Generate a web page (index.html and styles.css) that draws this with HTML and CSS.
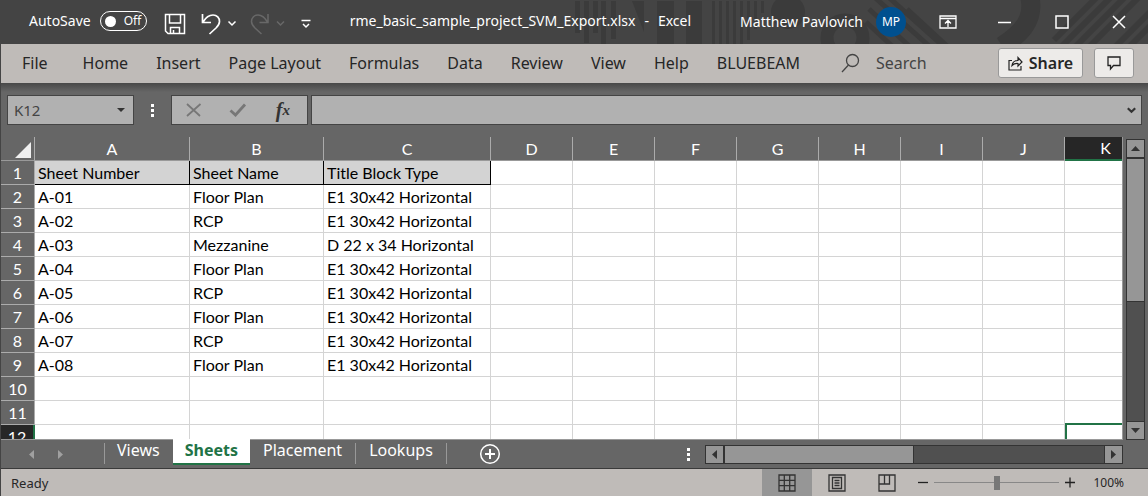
FILE: index.html
```html
<!DOCTYPE html>
<html lang="en">
<head>
<meta charset="utf-8">
<title>rme_basic_sample_project_SVM_Export.xlsx - Excel</title>
<link rel="stylesheet" href="styles.css">
</head>
<body>
<div class="app">
  <header class="titlebar">
    <svg class="titlebar-art" width="588" height="44" viewBox="0 0 588 44" aria-hidden="true">
      <g fill="#3b3b3b">
        <path d="M15 1h5v32h-5zM24 1h5v42h-5zM33 1h5v32h-5zM41 1h5v43h-5zM51 1h5v38h-5z"/>
        <path d="M72 1h12v31zM97 1h17v43H97zM126 1h16v43h-16z"/>
        <path d="M152 1h3v43h-3zM159 1h3v43h-3zM166 1h3v43h-3zM173 1h3v43h-3zM180 1h3v43h-3zM187 1h3v39h-3zM194 1h3v28h-3zM201 1h3v12h-3z"/>
        <circle cx="228" cy="12" r="17"/>
      </g>
      <g fill="none" stroke="#3b3b3b">
        <circle cx="285" cy="38" r="18" stroke-width="13"/>
        <path stroke-width="5" d="M325-6l58 52M311-6l58 52M347 9l40 37M309 9l40 37M306 22l26 24"/>
        <path stroke-width="19" d="M470-2c4 20-6 34-28 48"/>
        <path stroke-width="6" d="M494 40l44-44M502 46l50-50M516 46l50-50M530 46l50-50M556 46l34-34M570 46l20-20"/>
      </g>
    </svg>
    <label class="autosave">AutoSave
      <input type="checkbox" role="switch" class="autosave-input">
      <span class="switch"><span class="switch-knob"></span>Off</span>
    </label>
    <div class="quick">
      <button class="icon-btn save" aria-label="Save"><svg width="22" height="22" viewBox="0 0 22 22"><g fill="none" stroke="#fff" stroke-width="1.500"><path d="M1.500 1.500h19v19H4l-2.500-2.500zM5.500 1.500v8.500h11V1.500M6.500 20.500v-6h9v6M9.500 20v-3"/></g></svg></button>
      <button class="icon-btn undo" aria-label="Undo"><svg width="34" height="22" viewBox="0 0 34 22"><g fill="none" stroke="#fff"><path stroke-width="1.700" d="M1.500 1v8.500H10M2 9C5 4 8 2 12 2c4 0 6.500 3 6.500 6.500 0 2.500-1.500 4.500-3.500 6.500L8.500 21"/><path stroke-width="1.500" d="M27.500 8.500l3.500 3.500 3.500-3.500"/></g></svg></button>
      <button class="icon-btn redo" aria-label="Redo" disabled><svg width="34" height="22" viewBox="0 0 34 22"><g fill="none" stroke="#686868"><path stroke-width="1.500" d="M18 1v8.500H9.500M17.500 9C14.500 4 11.500 2 8 2 4 2 1.500 5 1.500 8.500c0 2.500 1.500 4.500 3.500 6.500l6.500 6"/><path stroke-width="1.500" d="M27 8.500l3.500 3.500L34 8.500"/></g></svg></button>
      <button class="icon-btn more" aria-label="Customize Quick Access Toolbar"><svg width="10" height="10" viewBox="0 0 10 10"><path fill="none" stroke="#fff" stroke-width="1.500" d="M.5 1.500h9M2 5l3 3 3-3"/></svg></button>
    </div>
    <h1 class="doc-title"><span>rme_basic_sample_project_SVM_Export.xlsx</span><span>-</span><span>Excel</span></h1>
    <div class="account"><span>Matthew Pavlovich</span><span class="avatar">MP</span></div>
    <div class="window-controls">
      <button class="icon-btn" aria-label="Ribbon Display Options"><svg width="18" height="14" viewBox="0 0 18 14"><path fill="none" stroke="#fff" stroke-width="1.300" d="M1 1h16v12H1zM1 3.500h16M9 12V6M6 8.500L9 5.500l3 3"/></svg></button>
      <button class="icon-btn" aria-label="Minimize"><svg width="14" height="14" viewBox="0 0 14 14"><path stroke="#fff" stroke-width="1.500" d="M0 7.500h13"/></svg></button>
      <button class="icon-btn" aria-label="Maximize"><svg width="14" height="14" viewBox="0 0 14 14"><path fill="none" stroke="#fff" stroke-width="1.500" d="M1 1h12v12H1z"/></svg></button>
      <button class="icon-btn" aria-label="Close"><svg width="14" height="14" viewBox="0 0 14 14"><path stroke="#fff" stroke-width="1.500" d="M1 1l12 12M13 1L1 13"/></svg></button>
    </div>
  </header>

  <nav class="ribbon">
    <div class="tabs">
      <button class="tab file">File</button>
      <button class="tab">Home</button>
      <button class="tab">Insert</button>
      <button class="tab">Page Layout</button>
      <button class="tab">Formulas</button>
      <button class="tab">Data</button>
      <button class="tab">Review</button>
      <button class="tab">View</button>
      <button class="tab">Help</button>
      <button class="tab">BLUEBEAM</button>
    </div>
    <button class="search"><svg width="20" height="20" viewBox="0 0 20 20"><g fill="none" stroke="#444" stroke-width="1.300"><circle cx="11.500" cy="7.500" r="6"/><path d="M7.500 12L1 19"/></g></svg>Search</button>
    <div class="ribbon-actions">
      <button class="pill share"><svg width="15" height="15" viewBox="0 0 15 15"><path fill="none" stroke="#222" stroke-width="1.200" d="M4 4.500H1v9.500h12v-4M4 9.500C4.500 6 7 4.500 10 4.500V1.500L14 6l-4 4V7.500C7.500 7.300 5.500 8 4 9.500z"/></svg>Share</button>
      <button class="pill comment" aria-label="Comments"><svg width="14" height="14" viewBox="0 0 14 14"><path fill="none" stroke="#222" stroke-width="1.300" d="M1 1h12v8.500H6.500L3.500 13V9.500H1z"/></svg></button>
    </div>
  </nav>

  <div class="formula-bar">
    <button class="name-box"><span>K12</span><svg width="8" height="4" viewBox="0 0 8 4"><path fill="#333" d="M0 0h8L4 4z"/></svg></button>
    <span class="dots"><i></i><i></i><i></i></span>
    <div class="fx-group">
      <button class="icon-btn" aria-label="Cancel"><svg width="16" height="14" viewBox="0 0 16 14"><path fill="none" stroke="#777" stroke-width="1.800" d="M1 1l13 12M14.500 1L1 13"/></svg></button>
      <button class="icon-btn" aria-label="Enter"><svg width="18" height="14" viewBox="0 0 18 14"><path fill="none" stroke="#777" stroke-width="2.800" d="M1.500 7.500l5 4.500L16 1.500"/></svg></button>
      <button class="icon-btn fx" aria-label="Insert Function">f<sub>x</sub></button>
    </div>
    <div class="formula-field">
      <input class="formula-input" type="text" aria-label="Formula">
      <svg width="9" height="7" viewBox="0 0 9 7"><path fill="none" stroke="#333" stroke-width="2.200" d="M.8 1.200l3.700 3.600 3.700-3.600"/></svg>
    </div>
  </div>

  <main class="workspace">
    <div class="grid">
      <table class="sheet">
        <colgroup><col class="col-head"><col class="col-a"><col class="col-b"><col class="col-c"><col span="7" class="col-std"><col></colgroup>
        <thead><tr><th class="corner"><svg width="16" height="16" viewBox="0 0 16 16" role="img" aria-label="Select all"><path fill="#f0f0f0" d="M16 0v16H0z"/></svg></th><th>A</th><th>B</th><th>C</th><th>D</th><th>E</th><th>F</th><th>G</th><th>H</th><th>I</th><th>J</th><th class="current-col">K</th></tr></thead>
        <tbody>
          <tr class="labels"><th>1</th><td>Sheet Number</td><td>Sheet Name</td><td>Title Block Type</td><td></td><td></td><td></td><td></td><td></td><td></td><td></td><td></td></tr>
          <tr><th>2</th><td>A-01</td><td>Floor Plan</td><td>E1 30x42 Horizontal</td><td></td><td></td><td></td><td></td><td></td><td></td><td></td><td></td></tr>
          <tr><th>3</th><td>A-02</td><td>RCP</td><td>E1 30x42 Horizontal</td><td></td><td></td><td></td><td></td><td></td><td></td><td></td><td></td></tr>
          <tr><th>4</th><td>A-03</td><td>Mezzanine</td><td>D 22 x 34 Horizontal</td><td></td><td></td><td></td><td></td><td></td><td></td><td></td><td></td></tr>
          <tr><th>5</th><td>A-04</td><td>Floor Plan</td><td>E1 30x42 Horizontal</td><td></td><td></td><td></td><td></td><td></td><td></td><td></td><td></td></tr>
          <tr><th>6</th><td>A-05</td><td>RCP</td><td>E1 30x42 Horizontal</td><td></td><td></td><td></td><td></td><td></td><td></td><td></td><td></td></tr>
          <tr><th>7</th><td>A-06</td><td>Floor Plan</td><td>E1 30x42 Horizontal</td><td></td><td></td><td></td><td></td><td></td><td></td><td></td><td></td></tr>
          <tr><th>8</th><td>A-07</td><td>RCP</td><td>E1 30x42 Horizontal</td><td></td><td></td><td></td><td></td><td></td><td></td><td></td><td></td></tr>
          <tr><th>9</th><td>A-08</td><td>Floor Plan</td><td>E1 30x42 Horizontal</td><td></td><td></td><td></td><td></td><td></td><td></td><td></td><td></td></tr>
          <tr><th>10</th><td></td><td></td><td></td><td></td><td></td><td></td><td></td><td></td><td></td><td></td><td></td></tr>
          <tr class="before-current"><th>11</th><td></td><td></td><td></td><td></td><td></td><td></td><td></td><td></td><td></td><td></td><td></td></tr>
          <tr><th class="current-row">12</th><td></td><td></td><td></td><td></td><td></td><td></td><td></td><td></td><td></td><td></td><td class="active-cell"></td></tr>
        </tbody>
      </table>
    </div>
    <div class="vscroll">
      <button class="scroll-btn" aria-label="Scroll up"><svg width="9" height="5" viewBox="0 0 9 5"><path fill="#333" d="M0 5h9L4.500 0z"/></svg></button>
      <div class="track"><div class="thumb"></div></div>
      <button class="scroll-btn" aria-label="Scroll down"><svg width="9" height="5" viewBox="0 0 9 5"><path fill="#333" d="M0 0h9L4.500 5z"/></svg></button>
    </div>
  </main>

  <div class="sheetbar">
    <div class="sheet-nav">
      <button class="icon-btn" aria-label="Previous sheet"><svg width="5" height="9" viewBox="0 0 5 9"><path fill="#a0a0a0" d="M5 0v9L0 4.500z"/></svg></button>
      <button class="icon-btn" aria-label="Next sheet"><svg width="5" height="9" viewBox="0 0 5 9"><path fill="#a0a0a0" d="M0 0v9l5-4.500z"/></svg></button>
    </div>
    <div class="sheet-tabs">
      <button class="sheet-tab views">Views</button>
      <button class="sheet-tab selected">Sheets</button>
      <button class="sheet-tab">Placement</button>
      <button class="sheet-tab">Lookups</button>
    </div>
    <button class="icon-btn add" aria-label="New sheet"><svg width="22" height="22" viewBox="0 0 22 22"><g fill="none" stroke="#fff"><circle cx="11" cy="11" r="9.300" stroke-width="1.500"/><path stroke-width="2" d="M11 6v10M6 11h10"/></g></svg></button>
    <span class="dots"><i></i><i></i><i></i></span>
    <div class="hscroll">
      <button class="scroll-btn" aria-label="Scroll left"><svg width="5" height="9" viewBox="0 0 5 9"><path fill="#333" d="M5 0v9L0 4.500z"/></svg></button>
      <div class="track"><div class="thumb"></div></div>
      <button class="scroll-btn" aria-label="Scroll right"><svg width="5" height="9" viewBox="0 0 5 9"><path fill="#333" d="M0 0v9l5-4.500z"/></svg></button>
    </div>
  </div>

  <footer class="statusbar">
    <span class="ready">Ready</span>
    <div class="view-modes">
      <button class="mode selected" aria-label="Normal"><svg width="18" height="18" viewBox="0 0 18 18"><path fill="none" stroke="#333" stroke-width="1.300" d="M1 1h16v16H1zM6.300 1v16M11.700 1v16M1 6.300h16M1 11.700h16"/></svg></button>
      <button class="mode" aria-label="Page Layout"><svg width="18" height="18" viewBox="0 0 18 18"><g fill="none" stroke="#333" stroke-width="1.300"><path d="M1 1h16v16H1zM4.500 3.500h9v11h-9z"/><path d="M6.500 6.500h5M6.500 9h5M6.500 11.500h5"/></g></svg></button>
      <button class="mode" aria-label="Page Break Preview"><svg width="18" height="18" viewBox="0 0 18 18"><path fill="none" stroke="#333" stroke-width="1.300" d="M1 1h16v16H1zM6.500 1v9M1 10h10.500V1"/></svg></button>
    </div>
    <div class="zoom">
      <button class="icon-btn" aria-label="Zoom out"><svg width="11" height="11" viewBox="0 0 11 11"><path stroke="#222" stroke-width="1.300" d="M0 5.500h10"/></svg></button>
      <input class="zoom-slider" type="range" min="0" max="200" value="100" aria-label="Zoom">
      <button class="icon-btn" aria-label="Zoom in"><svg width="11" height="11" viewBox="0 0 11 11"><path stroke="#222" stroke-width="1.300" d="M0 5.500h10M5 .5v10"/></svg></button>
      <span class="zoom-value">100%</span>
    </div>
  </footer>
</div>
</body>
</html>
```
FILE: styles.css
```css
* { box-sizing: border-box; }

body {
  margin: 0;
  font-family: "Noto Sans", "Open Sans", sans-serif;
  font-size: 16px;
  color: #262626;
}

button, input {
  font: inherit;
  color: inherit;
  margin: 0;
  padding: 0;
  border: 0;
  border-radius: 0;
  background: none;
}

svg { display: block; flex: none; overflow: visible; }

.app {
  display: flex;
  flex-direction: column;
  height: 100vh;
  background: #666;
  border-left: 1px solid #444;
}

.icon-btn { display: flex; align-items: center; justify-content: center; }

/* Title bar */
.titlebar {
  position: relative;
  display: flex;
  align-items: center;
  flex: none;
  height: 44px;
  padding-left: 28px;
  background: #444;
  color: #fff;
  font-size: 14px;
  line-height: 20px;
  white-space: nowrap;
  overflow: hidden;
}
.titlebar-art { position: absolute; top: 0; right: 0; }
.titlebar > :not(.titlebar-art) { position: relative; }
.autosave { display: flex; align-items: center; gap: 9px; padding-bottom: 2px; }
.autosave-input { position: absolute; opacity: 0; width: 1px; height: 1px; }
.switch {
  display: flex;
  align-items: center;
  gap: 8px;
  width: 47px;
  height: 20px;
  padding-left: 4px;
  border: 1px solid #fff;
  border-radius: 10px;
  font-size: 12px;
}
.switch-knob { width: 11px; height: 11px; border-radius: 50%; background: #fff; }
.quick { display: flex; align-items: center; gap: 15px; margin-left: 17px; padding-top: 3px; }
.more { margin-left: 2px; }
.doc-title { display: flex; gap: 9px; flex: 1; margin: 0; padding: 0 0 2px 39px; font-size: 14px; font-weight: 400; }
.account { display: flex; align-items: center; gap: 13px; }
.avatar {
  display: flex;
  align-items: center;
  justify-content: center;
  width: 30px;
  height: 30px;
  border-radius: 50%;
  background: #00508f;
  font-size: 12px;
}
.window-controls { display: flex; padding: 0 1px 0 13px; }
.window-controls .icon-btn { width: 57px; height: 44px; }

/* Ribbon */
.ribbon {
  display: flex;
  align-items: center;
  flex: none;
  height: 39px;
  padding: 0 14px 1px 21px;
  background: #bfbbb8;
  white-space: nowrap;
}
.tabs { display: flex; gap: 28px; }
.file { margin-right: 7px; }
.search { display: flex; align-items: center; gap: 15px; margin-left: 41px; color: #444; }
.ribbon-actions { display: flex; gap: 11px; margin-left: auto; }
.pill {
  display: flex;
  align-items: center;
  justify-content: center;
  gap: 6px;
  height: 30px;
  border: 1px solid #999;
  border-radius: 3px;
  background: #edebe9;
  font-weight: 600;
}
.share { width: 85px; }
.comment { width: 40px; }

/* Formula bar */
.formula-bar {
  display: flex;
  align-items: center;
  flex: none;
  height: 54px;
  padding: 0 6px;
  background: linear-gradient(#484848, #666 9px);
}
.name-box, .fx-group, .formula-field {
  display: flex;
  align-items: center;
  height: 30px;
  border: 1px solid #444;
  background: #b1b1b1;
}
.name-box { justify-content: space-between; width: 127px; padding: 0 8px 0 6px; color: #444; font-size: 15px; }
.dots { display: flex; flex-direction: column; gap: 2px; }
.dots i { width: 3px; height: 3px; background: #fff; }
.formula-bar .dots { margin: 0 17px; }
.fx-group { width: 137px; padding-right: 2px; }
.fx-group .icon-btn { flex: 1; }
.fx { font: italic bold 20px "Liberation Serif", serif; color: #333; }
.fx sub { font-size: 15px; }
.formula-field { flex: 1; margin-left: 3px; padding-right: 5px; }
.formula-input { flex: 1; min-width: 0; height: 28px; }

/* Worksheet */
.workspace { display: flex; flex: 1; min-height: 0; }
.grid {
  flex: 1;
  min-width: 0;
  overflow: hidden;
  border-right: 1px solid #999;
  border-bottom: 1px solid #999;
}
.sheet {
  width: 100%;
  min-width: 1146px;
  table-layout: fixed;
  border-collapse: separate;
  border-spacing: 0;
  background: #fff;
  color: #000;
  font-family: Lato, "Open Sans", sans-serif;
  font-size: 16px;
  line-height: 22px;
  white-space: nowrap;
}
.col-head { width: 34px; }
.col-a { width: 155px; }
.col-b { width: 134px; }
.col-c { width: 167px; }
.col-std { width: 82px; }
.sheet th, .sheet td { height: 24px; padding: 0; border-right: 1px solid #d4d4d4; border-bottom: 1px solid #d4d4d4; }
.sheet td { padding-left: 3px; }
.sheet th { background: #666; color: #fff; font-weight: 400; text-align: center; border-color: #ababab; }
.sheet thead th { border-bottom-color: #999; }
.corner svg { margin: 2px 0 0 14px; }
.sheet .labels td:nth-child(-n+4) { background: #d3d3d3; border-color: #000; }
.sheet .current-col { background: #262626; border-bottom: 2px solid #217346; }
.sheet .current-row { background: #262626; border-right: 2px solid #217346; }
.sheet .before-current td:last-child { border-bottom: 2px solid #217346; }
.sheet .active-cell { border-left: 2px solid #217346; }

/* Scrollbars */
.vscroll { display: flex; flex-direction: column; width: 19px; margin: 2px 3px 0 3px; border: 1px solid #333; }
.scroll-btn { display: flex; align-items: center; justify-content: center; flex: none; width: 17px; height: 17px; background: #969696; }
.track { flex: 1; background: #505050; }
.thumb { background: #969696; border: 1px solid #333; }
.vscroll .track { border-bottom: 1px solid #333; }
.vscroll .thumb { height: 145px; border-width: 2px 0 1px; }
.hscroll { display: flex; width: 418px; border: 1px solid #333; }
.hscroll .track { border-right: 1px solid #333; }
.hscroll .thumb { width: 191px; height: 17px; border-width: 0 1px 0 2px; }

/* Sheet tabs */
.sheetbar {
  display: flex;
  align-items: center;
  flex: none;
  height: 29px;
  padding-right: 25px;
  border-bottom: 1px solid #3a3a3a;
  white-space: nowrap;
}
.sheet-nav { display: flex; gap: 24px; width: 103px; padding-left: 28px; }
.sheet-tabs { display: flex; align-self: flex-start; }
.sheet-tab { height: 21px; margin-top: 3px; padding: 0 13px 6px; border-right: 1px solid #999; color: #fff; line-height: 15px; }
.sheet-tab.views { padding-left: 12px; border-left: 1px solid #999; border-right: 0; }
.sheet-tab.selected { height: 26px; margin-top: -1px; padding: 0 12px 2px; border-right: 0; border-bottom: 2px solid #217346; background: #fff; color: #217346; font-weight: 700; }
.add { margin-left: 32px; }
.sheetbar .dots { margin: 0 15px 0 auto; }

/* Status bar */
.statusbar {
  display: flex;
  align-items: center;
  flex: none;
  height: 27px;
  padding: 0 24px 0 10px;
  background: #bfbbb8;
  font-size: 13px;
}
.ready { flex: 1; }
.view-modes { display: flex; }
.mode { display: flex; align-items: center; justify-content: center; width: 50px; height: 28px; }
.mode.selected { background: #969696; }
.zoom { display: flex; align-items: center; margin-left: 6px; }
.zoom-slider { appearance: none; width: 125px; height: 14px; margin: 0 6px 0 5px; background: linear-gradient(#888, #888) center / 100% 1px no-repeat; }
.zoom-slider::-webkit-slider-thumb { appearance: none; width: 6px; height: 14px; background: #777; }
.zoom-value { margin-left: 17px; font-size: 12px; }
```
